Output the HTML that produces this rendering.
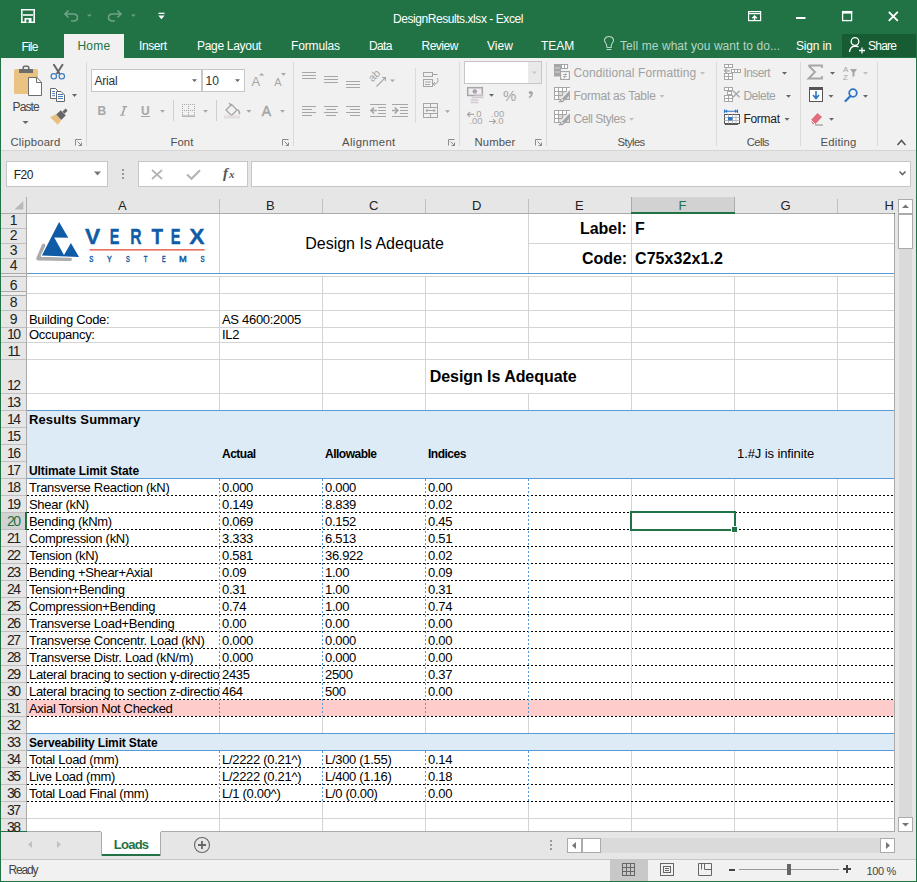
<!DOCTYPE html>
<html><head><meta charset="utf-8"><style>
html,body{margin:0;padding:0;width:917px;height:882px;overflow:hidden;}
body{position:relative;font-family:"Liberation Sans",sans-serif;}
body>div,body>svg{position:absolute;}
</style></head><body>
<div style="left:0px;top:0px;width:917px;height:882px;background:#217346;"></div>
<div style="left:393.00px;top:12px;font-size:12px;line-height:14px;color:#fff;white-space:nowrap;letter-spacing:-0.440px;">DesignResults.xlsx - Excel</div>
<div style="left:64px;top:34px;width:60px;height:24px;background:#f1f1f1;"></div>
<div style="left:21.50px;top:40px;font-size:12px;line-height:14px;color:#fff;white-space:nowrap;letter-spacing:-0.833px;">File</div>
<div style="left:77.40px;top:39px;font-size:12px;line-height:14px;color:#217346;white-space:nowrap;letter-spacing:0.233px;">Home</div>
<div style="left:139.00px;top:39px;font-size:12px;line-height:14px;color:#fff;white-space:nowrap;letter-spacing:-0.400px;">Insert</div>
<div style="left:197.00px;top:39px;font-size:12px;line-height:14px;color:#fff;white-space:nowrap;letter-spacing:-0.300px;">Page Layout</div>
<div style="left:291.00px;top:39px;font-size:12px;line-height:14px;color:#fff;white-space:nowrap;letter-spacing:-0.143px;">Formulas</div>
<div style="left:369.00px;top:39px;font-size:12px;line-height:14px;color:#fff;white-space:nowrap;letter-spacing:-0.667px;">Data</div>
<div style="left:421.50px;top:39px;font-size:12px;line-height:14px;color:#fff;white-space:nowrap;letter-spacing:-0.500px;">Review</div>
<div style="left:487.00px;top:39px;font-size:12px;line-height:14px;color:#fff;white-space:nowrap;">View</div>
<div style="left:541.00px;top:39px;font-size:12px;line-height:14px;color:#fff;white-space:nowrap;">TEAM</div>
<div style="left:620.00px;top:39px;font-size:12px;line-height:14px;color:#b8d4c3;white-space:nowrap;letter-spacing:0.069px;">Tell me what you want to do...</div>
<div style="left:796.00px;top:39px;font-size:12px;line-height:14px;color:#fff;white-space:nowrap;letter-spacing:-0.167px;">Sign in</div>
<div style="left:842px;top:34px;width:74px;height:23px;background:#185c34;"></div>
<div style="left:868.00px;top:39px;font-size:12px;line-height:14px;color:#fff;white-space:nowrap;letter-spacing:-0.750px;">Share</div>
<div style="left:1px;top:58px;width:915px;height:92px;background:#f1f1f1;"></div>
<div style="left:1px;top:150px;width:915px;height:1px;background:#d5d5d5;"></div>
<div style="left:1px;top:151px;width:915px;height:46px;background:#e6e6e6;"></div>
<div style="left:6px;top:161px;width:100px;height:24px;border:1px solid #c6c6c6;background:#fff;"></div>
<div style="left:13.70px;top:167.5px;font-size:12px;line-height:14px;color:#222;white-space:nowrap;letter-spacing:-0.450px;">F20</div>
<div style="left:138px;top:161px;width:108px;height:24px;border:1px solid #c6c6c6;background:#fff;"></div>
<div style="left:251px;top:161px;width:658px;height:24px;border:1px solid #c6c6c6;background:#fff;"></div>
<div style="left:1px;top:197px;width:915px;height:16px;background:#e6e6e6;"></div>
<div style="left:1px;top:213px;width:26px;height:618px;background:#e6e6e6;"></div>
<div style="left:631px;top:197px;width:103px;height:16px;background:#d2d2d2;"></div>
<div style="left:219px;top:199px;width:1px;height:14px;background:#c0c0c0;"></div>
<div style="left:322px;top:199px;width:1px;height:14px;background:#c0c0c0;"></div>
<div style="left:425px;top:199px;width:1px;height:14px;background:#c0c0c0;"></div>
<div style="left:528px;top:199px;width:1px;height:14px;background:#c0c0c0;"></div>
<div style="left:631px;top:199px;width:1px;height:14px;background:#c0c0c0;"></div>
<div style="left:734px;top:199px;width:1px;height:14px;background:#c0c0c0;"></div>
<div style="left:837px;top:199px;width:1px;height:14px;background:#c0c0c0;"></div>
<div style="left:26px;top:197px;width:1px;height:634px;background:#ababab;"></div>
<svg style="left:14px;top:200px;" width="10" height="10" viewBox="0 0 10 10"><path d="M9.3 1 V9.6 H0.4 Z" fill="#b9b9b9"/></svg>
<div style="left:1px;top:213px;width:893px;height:1px;background:#ababab;"></div>
<div style="left:631px;top:197px;width:1px;height:15px;background:#ababab;"></div>
<div style="left:734px;top:197px;width:1px;height:15px;background:#ababab;"></div>
<div style="left:631px;top:212px;width:104px;height:2px;background:#217346;"></div>
<div style="left:118.00px;top:198px;font-size:13px;line-height:15px;color:#222;white-space:nowrap;">A</div>
<div style="left:266.00px;top:198px;font-size:13px;line-height:15px;color:#222;white-space:nowrap;">B</div>
<div style="left:369.00px;top:198px;font-size:13px;line-height:15px;color:#222;white-space:nowrap;">C</div>
<div style="left:472.00px;top:198px;font-size:13px;line-height:15px;color:#222;white-space:nowrap;">D</div>
<div style="left:575.00px;top:198px;font-size:13px;line-height:15px;color:#222;white-space:nowrap;">E</div>
<div style="left:678.50px;top:198px;font-size:13px;line-height:15px;color:#217346;white-space:nowrap;">F</div>
<div style="left:780.50px;top:198px;font-size:13px;line-height:15px;color:#222;white-space:nowrap;">G</div>
<div style="left:884.50px;top:198px;font-size:13px;line-height:15px;color:#222;white-space:nowrap;">H</div>
<div style="left:27px;top:214px;width:867px;height:617px;background:#fff;"></div>
<div style="left:27px;top:411px;width:867px;height:67px;background:#ddebf7;"></div>
<div style="left:27px;top:700px;width:867px;height:16px;background:#ffcccc;"></div>
<div style="left:27px;top:734px;width:867px;height:16px;background:#ddebf7;"></div>
<div style="left:219px;top:214px;width:1px;height:59px;background:#d4d4d4;"></div>
<div style="left:528px;top:214px;width:1px;height:59px;background:#d4d4d4;"></div>
<div style="left:631px;top:214px;width:1px;height:59px;background:#d4d4d4;"></div>
<div style="left:528px;top:243px;width:366px;height:1px;background:#d4d4d4;"></div>
<div style="left:27px;top:273px;width:867px;height:1px;background:#5b9bd5;"></div>
<div style="left:27px;top:276px;width:867px;height:1px;background:#d4d4d4;"></div>
<div style="left:27px;top:293px;width:867px;height:1px;background:#d4d4d4;"></div>
<div style="left:27px;top:310px;width:867px;height:1px;background:#d4d4d4;"></div>
<div style="left:27px;top:327px;width:867px;height:1px;background:#d4d4d4;"></div>
<div style="left:27px;top:342px;width:867px;height:1px;background:#d4d4d4;"></div>
<div style="left:27px;top:359px;width:867px;height:1px;background:#d4d4d4;"></div>
<div style="left:27px;top:393px;width:867px;height:1px;background:#d4d4d4;"></div>
<div style="left:27px;top:410px;width:867px;height:1px;background:#5b9bd5;"></div>
<div style="left:219px;top:277px;width:1px;height:133px;background:#d4d4d4;"></div>
<div style="left:322px;top:277px;width:1px;height:133px;background:#d4d4d4;"></div>
<div style="left:425px;top:277px;width:1px;height:133px;background:#d4d4d4;"></div>
<div style="left:528px;top:277px;width:1px;height:83px;background:#d4d4d4;"></div>
<div style="left:528px;top:394px;width:1px;height:16px;background:#d4d4d4;"></div>
<div style="left:631px;top:277px;width:1px;height:133px;background:#d4d4d4;"></div>
<div style="left:734px;top:277px;width:1px;height:133px;background:#d4d4d4;"></div>
<div style="left:837px;top:277px;width:1px;height:133px;background:#d4d4d4;"></div>
<div style="left:27px;top:478px;width:867px;height:1px;background:#5b9bd5;"></div>
<div style="left:27px;top:495px;width:867px;height:1px;background:repeating-linear-gradient(90deg,#000 0 2px,transparent 2px 4px);"></div>
<div style="left:27px;top:512px;width:867px;height:1px;background:repeating-linear-gradient(90deg,#000 0 2px,transparent 2px 4px);"></div>
<div style="left:27px;top:529px;width:867px;height:1px;background:repeating-linear-gradient(90deg,#000 0 2px,transparent 2px 4px);"></div>
<div style="left:27px;top:546px;width:867px;height:1px;background:repeating-linear-gradient(90deg,#000 0 2px,transparent 2px 4px);"></div>
<div style="left:27px;top:563px;width:867px;height:1px;background:repeating-linear-gradient(90deg,#000 0 2px,transparent 2px 4px);"></div>
<div style="left:27px;top:580px;width:867px;height:1px;background:repeating-linear-gradient(90deg,#000 0 2px,transparent 2px 4px);"></div>
<div style="left:27px;top:597px;width:867px;height:1px;background:repeating-linear-gradient(90deg,#000 0 2px,transparent 2px 4px);"></div>
<div style="left:27px;top:614px;width:867px;height:1px;background:repeating-linear-gradient(90deg,#000 0 2px,transparent 2px 4px);"></div>
<div style="left:27px;top:631px;width:867px;height:1px;background:repeating-linear-gradient(90deg,#000 0 2px,transparent 2px 4px);"></div>
<div style="left:27px;top:648px;width:867px;height:1px;background:repeating-linear-gradient(90deg,#000 0 2px,transparent 2px 4px);"></div>
<div style="left:27px;top:665px;width:867px;height:1px;background:repeating-linear-gradient(90deg,#000 0 2px,transparent 2px 4px);"></div>
<div style="left:27px;top:682px;width:867px;height:1px;background:repeating-linear-gradient(90deg,#000 0 2px,transparent 2px 4px);"></div>
<div style="left:27px;top:699px;width:867px;height:1px;background:repeating-linear-gradient(90deg,#000 0 2px,transparent 2px 4px);"></div>
<div style="left:27px;top:716px;width:867px;height:1px;background:repeating-linear-gradient(90deg,#000 0 2px,transparent 2px 4px);"></div>
<div style="left:219px;top:479px;width:1px;height:237px;background:repeating-linear-gradient(180deg,#5b9bd5 0 2px,transparent 2px 4px);"></div>
<div style="left:322px;top:479px;width:1px;height:237px;background:repeating-linear-gradient(180deg,#5b9bd5 0 2px,transparent 2px 4px);"></div>
<div style="left:425px;top:479px;width:1px;height:237px;background:repeating-linear-gradient(180deg,#5b9bd5 0 2px,transparent 2px 4px);"></div>
<div style="left:528px;top:479px;width:1px;height:237px;background:repeating-linear-gradient(180deg,#5b9bd5 0 2px,transparent 2px 4px);"></div>
<div style="left:631px;top:479px;width:1px;height:220px;background:#d4d4d4;"></div>
<div style="left:734px;top:479px;width:1px;height:220px;background:#d4d4d4;"></div>
<div style="left:837px;top:479px;width:1px;height:220px;background:#d4d4d4;"></div>
<div style="left:219px;top:717px;width:1px;height:16px;background:#d4d4d4;"></div>
<div style="left:322px;top:717px;width:1px;height:16px;background:#d4d4d4;"></div>
<div style="left:425px;top:717px;width:1px;height:16px;background:#d4d4d4;"></div>
<div style="left:528px;top:717px;width:1px;height:16px;background:#d4d4d4;"></div>
<div style="left:631px;top:717px;width:1px;height:16px;background:#d4d4d4;"></div>
<div style="left:734px;top:717px;width:1px;height:16px;background:#d4d4d4;"></div>
<div style="left:837px;top:717px;width:1px;height:16px;background:#d4d4d4;"></div>
<div style="left:27px;top:733px;width:867px;height:1px;background:#5b9bd5;"></div>
<div style="left:27px;top:750px;width:867px;height:1px;background:#5b9bd5;"></div>
<div style="left:27px;top:767px;width:867px;height:1px;background:repeating-linear-gradient(90deg,#000 0 2px,transparent 2px 4px);"></div>
<div style="left:27px;top:784px;width:867px;height:1px;background:repeating-linear-gradient(90deg,#000 0 2px,transparent 2px 4px);"></div>
<div style="left:27px;top:801px;width:867px;height:1px;background:repeating-linear-gradient(90deg,#000 0 2px,transparent 2px 4px);"></div>
<div style="left:219px;top:751px;width:1px;height:50px;background:repeating-linear-gradient(180deg,#5b9bd5 0 2px,transparent 2px 4px);"></div>
<div style="left:322px;top:751px;width:1px;height:50px;background:repeating-linear-gradient(180deg,#5b9bd5 0 2px,transparent 2px 4px);"></div>
<div style="left:425px;top:751px;width:1px;height:50px;background:repeating-linear-gradient(180deg,#5b9bd5 0 2px,transparent 2px 4px);"></div>
<div style="left:528px;top:751px;width:1px;height:50px;background:repeating-linear-gradient(180deg,#5b9bd5 0 2px,transparent 2px 4px);"></div>
<div style="left:631px;top:751px;width:1px;height:50px;background:#d4d4d4;"></div>
<div style="left:734px;top:751px;width:1px;height:50px;background:#d4d4d4;"></div>
<div style="left:837px;top:751px;width:1px;height:50px;background:#d4d4d4;"></div>
<div style="left:27px;top:818px;width:867px;height:1px;background:#d4d4d4;"></div>
<div style="left:219px;top:802px;width:1px;height:29px;background:#d4d4d4;"></div>
<div style="left:322px;top:802px;width:1px;height:29px;background:#d4d4d4;"></div>
<div style="left:425px;top:802px;width:1px;height:29px;background:#d4d4d4;"></div>
<div style="left:528px;top:802px;width:1px;height:29px;background:#d4d4d4;"></div>
<div style="left:631px;top:802px;width:1px;height:29px;background:#d4d4d4;"></div>
<div style="left:734px;top:802px;width:1px;height:29px;background:#d4d4d4;"></div>
<div style="left:837px;top:802px;width:1px;height:29px;background:#d4d4d4;"></div>
<div style="left:630px;top:511px;width:106px;height:2px;background:#217346;"></div>
<div style="left:630px;top:529px;width:106px;height:2px;background:#217346;"></div>
<div style="left:630px;top:511px;width:2px;height:20px;background:#217346;"></div>
<div style="left:734px;top:511px;width:2px;height:20px;background:#217346;"></div>
<div style="left:731px;top:526px;width:7px;height:7px;background:#fff;"></div>
<div style="left:732px;top:527px;width:5px;height:5px;background:#217346;"></div>
<div style="left:894px;top:214px;width:1px;height:618px;background:#ababab;"></div>
<div style="left:27px;top:831px;width:868px;height:1px;background:#ababab;"></div>
<div style="left:1px;top:228px;width:25px;height:1px;background:#c0c0c0;"></div>
<div style="left:1px;top:243px;width:25px;height:1px;background:#c0c0c0;"></div>
<div style="left:1px;top:258px;width:25px;height:1px;background:#c0c0c0;"></div>
<div style="left:1px;top:273px;width:25px;height:1px;background:#c0c0c0;"></div>
<div style="left:1px;top:293px;width:25px;height:1px;background:#c0c0c0;"></div>
<div style="left:1px;top:310px;width:25px;height:1px;background:#c0c0c0;"></div>
<div style="left:1px;top:327px;width:25px;height:1px;background:#c0c0c0;"></div>
<div style="left:1px;top:342px;width:25px;height:1px;background:#c0c0c0;"></div>
<div style="left:1px;top:359px;width:25px;height:1px;background:#c0c0c0;"></div>
<div style="left:1px;top:393px;width:25px;height:1px;background:#c0c0c0;"></div>
<div style="left:1px;top:410px;width:25px;height:1px;background:#c0c0c0;"></div>
<div style="left:1px;top:427px;width:25px;height:1px;background:#c0c0c0;"></div>
<div style="left:1px;top:444px;width:25px;height:1px;background:#c0c0c0;"></div>
<div style="left:1px;top:461px;width:25px;height:1px;background:#c0c0c0;"></div>
<div style="left:1px;top:478px;width:25px;height:1px;background:#c0c0c0;"></div>
<div style="left:1px;top:495px;width:25px;height:1px;background:#c0c0c0;"></div>
<div style="left:1px;top:512px;width:25px;height:1px;background:#c0c0c0;"></div>
<div style="left:1px;top:529px;width:25px;height:1px;background:#c0c0c0;"></div>
<div style="left:1px;top:546px;width:25px;height:1px;background:#c0c0c0;"></div>
<div style="left:1px;top:563px;width:25px;height:1px;background:#c0c0c0;"></div>
<div style="left:1px;top:580px;width:25px;height:1px;background:#c0c0c0;"></div>
<div style="left:1px;top:597px;width:25px;height:1px;background:#c0c0c0;"></div>
<div style="left:1px;top:614px;width:25px;height:1px;background:#c0c0c0;"></div>
<div style="left:1px;top:631px;width:25px;height:1px;background:#c0c0c0;"></div>
<div style="left:1px;top:648px;width:25px;height:1px;background:#c0c0c0;"></div>
<div style="left:1px;top:665px;width:25px;height:1px;background:#c0c0c0;"></div>
<div style="left:1px;top:682px;width:25px;height:1px;background:#c0c0c0;"></div>
<div style="left:1px;top:699px;width:25px;height:1px;background:#c0c0c0;"></div>
<div style="left:1px;top:716px;width:25px;height:1px;background:#c0c0c0;"></div>
<div style="left:1px;top:733px;width:25px;height:1px;background:#c0c0c0;"></div>
<div style="left:1px;top:750px;width:25px;height:1px;background:#c0c0c0;"></div>
<div style="left:1px;top:767px;width:25px;height:1px;background:#c0c0c0;"></div>
<div style="left:1px;top:784px;width:25px;height:1px;background:#c0c0c0;"></div>
<div style="left:1px;top:801px;width:25px;height:1px;background:#c0c0c0;"></div>
<div style="left:1px;top:818px;width:25px;height:1px;background:#c0c0c0;"></div>
<div style="left:1px;top:835px;width:25px;height:1px;background:#c0c0c0;"></div>
<div style="left:1px;top:273px;width:25px;height:1px;background:#ababab;"></div>
<div style="left:1px;top:276px;width:25px;height:1px;background:#ababab;"></div>
<div style="left:1px;top:291px;width:25px;height:1px;background:#ababab;"></div>
<div style="left:1px;top:295px;width:25px;height:1px;background:#ababab;"></div>
<div style="left:1px;top:292px;width:25px;height:3px;background:#ececec;"></div>
<div style="left:1px;top:274px;width:25px;height:2px;background:#ececec;"></div>
<div style="left:1px;top:513px;width:25px;height:16px;background:#d2d2d2;"></div>
<div style="left:25px;top:512px;width:2px;height:18px;background:#217346;"></div>
<div style="left:9.70px;top:212px;font-size:14px;line-height:16px;color:#222;white-space:nowrap;">1</div>
<div style="left:9.70px;top:227px;font-size:14px;line-height:16px;color:#222;white-space:nowrap;">2</div>
<div style="left:9.70px;top:242px;font-size:14px;line-height:16px;color:#222;white-space:nowrap;">3</div>
<div style="left:9.70px;top:257px;font-size:14px;line-height:16px;color:#222;white-space:nowrap;">4</div>
<div style="left:9.70px;top:277px;font-size:14px;line-height:16px;color:#222;white-space:nowrap;">6</div>
<div style="left:9.70px;top:294px;font-size:14px;line-height:16px;color:#222;white-space:nowrap;">8</div>
<div style="left:9.70px;top:311px;font-size:14px;line-height:16px;color:#222;white-space:nowrap;">9</div>
<div style="left:7.00px;top:326px;font-size:14px;line-height:16px;color:#222;white-space:nowrap;letter-spacing:-1.600px;">10</div>
<div style="left:7.45px;top:343px;font-size:14px;line-height:16px;color:#222;white-space:nowrap;letter-spacing:-1.500px;">11</div>
<div style="left:7.00px;top:377px;font-size:14px;line-height:16px;color:#222;white-space:nowrap;letter-spacing:-1.600px;">12</div>
<div style="left:7.00px;top:394px;font-size:14px;line-height:16px;color:#222;white-space:nowrap;letter-spacing:-1.600px;">13</div>
<div style="left:7.00px;top:411px;font-size:14px;line-height:16px;color:#222;white-space:nowrap;letter-spacing:-1.600px;">14</div>
<div style="left:7.00px;top:428px;font-size:14px;line-height:16px;color:#222;white-space:nowrap;letter-spacing:-1.600px;">15</div>
<div style="left:7.00px;top:445px;font-size:14px;line-height:16px;color:#222;white-space:nowrap;letter-spacing:-1.600px;">16</div>
<div style="left:7.00px;top:462px;font-size:14px;line-height:16px;color:#222;white-space:nowrap;letter-spacing:-1.600px;">17</div>
<div style="left:7.00px;top:479px;font-size:14px;line-height:16px;color:#222;white-space:nowrap;letter-spacing:-1.600px;">18</div>
<div style="left:7.00px;top:496px;font-size:14px;line-height:16px;color:#222;white-space:nowrap;letter-spacing:-1.600px;">19</div>
<div style="left:7.00px;top:513px;font-size:14px;line-height:16px;color:#217346;white-space:nowrap;letter-spacing:-1.600px;">20</div>
<div style="left:7.00px;top:530px;font-size:14px;line-height:16px;color:#222;white-space:nowrap;letter-spacing:-1.600px;">21</div>
<div style="left:7.00px;top:547px;font-size:14px;line-height:16px;color:#222;white-space:nowrap;letter-spacing:-1.600px;">22</div>
<div style="left:7.00px;top:564px;font-size:14px;line-height:16px;color:#222;white-space:nowrap;letter-spacing:-1.600px;">23</div>
<div style="left:7.00px;top:581px;font-size:14px;line-height:16px;color:#222;white-space:nowrap;letter-spacing:-1.600px;">24</div>
<div style="left:7.00px;top:598px;font-size:14px;line-height:16px;color:#222;white-space:nowrap;letter-spacing:-1.600px;">25</div>
<div style="left:7.00px;top:615px;font-size:14px;line-height:16px;color:#222;white-space:nowrap;letter-spacing:-1.600px;">26</div>
<div style="left:7.00px;top:632px;font-size:14px;line-height:16px;color:#222;white-space:nowrap;letter-spacing:-1.600px;">27</div>
<div style="left:7.00px;top:649px;font-size:14px;line-height:16px;color:#222;white-space:nowrap;letter-spacing:-1.600px;">28</div>
<div style="left:7.00px;top:666px;font-size:14px;line-height:16px;color:#222;white-space:nowrap;letter-spacing:-1.600px;">29</div>
<div style="left:7.00px;top:683px;font-size:14px;line-height:16px;color:#222;white-space:nowrap;letter-spacing:-1.600px;">30</div>
<div style="left:7.00px;top:700px;font-size:14px;line-height:16px;color:#222;white-space:nowrap;letter-spacing:-1.600px;">31</div>
<div style="left:7.00px;top:717px;font-size:14px;line-height:16px;color:#222;white-space:nowrap;letter-spacing:-1.600px;">32</div>
<div style="left:7.00px;top:734px;font-size:14px;line-height:16px;color:#222;white-space:nowrap;letter-spacing:-1.600px;">33</div>
<div style="left:7.00px;top:751px;font-size:14px;line-height:16px;color:#222;white-space:nowrap;letter-spacing:-1.600px;">34</div>
<div style="left:7.00px;top:768px;font-size:14px;line-height:16px;color:#222;white-space:nowrap;letter-spacing:-1.600px;">35</div>
<div style="left:7.00px;top:785px;font-size:14px;line-height:16px;color:#222;white-space:nowrap;letter-spacing:-1.600px;">36</div>
<div style="left:7.00px;top:802px;font-size:14px;line-height:16px;color:#222;white-space:nowrap;letter-spacing:-1.600px;">37</div>
<div style="left:7.00px;top:819px;font-size:14px;line-height:16px;color:#222;white-space:nowrap;letter-spacing:-1.600px;">38</div>
<div style="left:29px;top:312px;font-size:13px;line-height:15px;color:#000;white-space:nowrap;letter-spacing:-0.3px;">Building Code:</div>
<div style="left:222px;top:312px;font-size:13px;line-height:15px;color:#000;white-space:nowrap;letter-spacing:-0.3px;">AS 4600:2005</div>
<div style="left:29px;top:327px;font-size:13px;line-height:15px;color:#000;white-space:nowrap;letter-spacing:-0.3px;">Occupancy:</div>
<div style="left:222px;top:327px;font-size:13px;line-height:15px;color:#000;white-space:nowrap;letter-spacing:-0.3px;">IL2</div>
<div style="left:29px;top:412px;font-size:13px;line-height:15px;color:#000;white-space:nowrap;letter-spacing:0.1px;font-weight:bold;">Results Summary</div>
<div style="left:222px;top:447px;font-size:12px;line-height:14px;color:#000;white-space:nowrap;letter-spacing:-0.5px;font-weight:bold;">Actual</div>
<div style="left:325px;top:447px;font-size:12px;line-height:14px;color:#000;white-space:nowrap;letter-spacing:-0.5px;font-weight:bold;">Allowable</div>
<div style="left:428px;top:447px;font-size:12px;line-height:14px;color:#000;white-space:nowrap;letter-spacing:-0.5px;font-weight:bold;">Indices</div>
<div style="left:29px;top:464px;font-size:12px;line-height:14px;color:#000;white-space:nowrap;letter-spacing:-0.1px;font-weight:bold;">Ultimate Limit State</div>
<div style="left:737px;top:446px;font-size:13px;line-height:15px;color:#000;white-space:nowrap;letter-spacing:-0.1px;">1.#J is infinite</div>
<div style="left:29px;top:480px;font-size:13px;line-height:15px;color:#000;white-space:nowrap;letter-spacing:-0.3px;">Transverse Reaction (kN)</div>
<div style="left:222px;top:480px;font-size:13px;line-height:15px;color:#000;white-space:nowrap;letter-spacing:-0.3px;">0.000</div>
<div style="left:325px;top:480px;font-size:13px;line-height:15px;color:#000;white-space:nowrap;letter-spacing:-0.3px;">0.000</div>
<div style="left:428px;top:480px;font-size:13px;line-height:15px;color:#000;white-space:nowrap;letter-spacing:-0.3px;">0.00</div>
<div style="left:29px;top:497px;font-size:13px;line-height:15px;color:#000;white-space:nowrap;letter-spacing:-0.3px;">Shear (kN)</div>
<div style="left:222px;top:497px;font-size:13px;line-height:15px;color:#000;white-space:nowrap;letter-spacing:-0.3px;">0.149</div>
<div style="left:325px;top:497px;font-size:13px;line-height:15px;color:#000;white-space:nowrap;letter-spacing:-0.3px;">8.839</div>
<div style="left:428px;top:497px;font-size:13px;line-height:15px;color:#000;white-space:nowrap;letter-spacing:-0.3px;">0.02</div>
<div style="left:29px;top:514px;font-size:13px;line-height:15px;color:#000;white-space:nowrap;letter-spacing:-0.3px;">Bending (kNm)</div>
<div style="left:222px;top:514px;font-size:13px;line-height:15px;color:#000;white-space:nowrap;letter-spacing:-0.3px;">0.069</div>
<div style="left:325px;top:514px;font-size:13px;line-height:15px;color:#000;white-space:nowrap;letter-spacing:-0.3px;">0.152</div>
<div style="left:428px;top:514px;font-size:13px;line-height:15px;color:#000;white-space:nowrap;letter-spacing:-0.3px;">0.45</div>
<div style="left:29px;top:531px;font-size:13px;line-height:15px;color:#000;white-space:nowrap;letter-spacing:-0.3px;">Compression (kN)</div>
<div style="left:222px;top:531px;font-size:13px;line-height:15px;color:#000;white-space:nowrap;letter-spacing:-0.3px;">3.333</div>
<div style="left:325px;top:531px;font-size:13px;line-height:15px;color:#000;white-space:nowrap;letter-spacing:-0.3px;">6.513</div>
<div style="left:428px;top:531px;font-size:13px;line-height:15px;color:#000;white-space:nowrap;letter-spacing:-0.3px;">0.51</div>
<div style="left:29px;top:548px;font-size:13px;line-height:15px;color:#000;white-space:nowrap;letter-spacing:-0.3px;">Tension (kN)</div>
<div style="left:222px;top:548px;font-size:13px;line-height:15px;color:#000;white-space:nowrap;letter-spacing:-0.3px;">0.581</div>
<div style="left:325px;top:548px;font-size:13px;line-height:15px;color:#000;white-space:nowrap;letter-spacing:-0.3px;">36.922</div>
<div style="left:428px;top:548px;font-size:13px;line-height:15px;color:#000;white-space:nowrap;letter-spacing:-0.3px;">0.02</div>
<div style="left:29px;top:565px;font-size:13px;line-height:15px;color:#000;white-space:nowrap;letter-spacing:-0.3px;">Bending +Shear+Axial</div>
<div style="left:222px;top:565px;font-size:13px;line-height:15px;color:#000;white-space:nowrap;letter-spacing:-0.3px;">0.09</div>
<div style="left:325px;top:565px;font-size:13px;line-height:15px;color:#000;white-space:nowrap;letter-spacing:-0.3px;">1.00</div>
<div style="left:428px;top:565px;font-size:13px;line-height:15px;color:#000;white-space:nowrap;letter-spacing:-0.3px;">0.09</div>
<div style="left:29px;top:582px;font-size:13px;line-height:15px;color:#000;white-space:nowrap;letter-spacing:-0.3px;">Tension+Bending</div>
<div style="left:222px;top:582px;font-size:13px;line-height:15px;color:#000;white-space:nowrap;letter-spacing:-0.3px;">0.31</div>
<div style="left:325px;top:582px;font-size:13px;line-height:15px;color:#000;white-space:nowrap;letter-spacing:-0.3px;">1.00</div>
<div style="left:428px;top:582px;font-size:13px;line-height:15px;color:#000;white-space:nowrap;letter-spacing:-0.3px;">0.31</div>
<div style="left:29px;top:599px;font-size:13px;line-height:15px;color:#000;white-space:nowrap;letter-spacing:-0.3px;">Compression+Bending</div>
<div style="left:222px;top:599px;font-size:13px;line-height:15px;color:#000;white-space:nowrap;letter-spacing:-0.3px;">0.74</div>
<div style="left:325px;top:599px;font-size:13px;line-height:15px;color:#000;white-space:nowrap;letter-spacing:-0.3px;">1.00</div>
<div style="left:428px;top:599px;font-size:13px;line-height:15px;color:#000;white-space:nowrap;letter-spacing:-0.3px;">0.74</div>
<div style="left:29px;top:616px;font-size:13px;line-height:15px;color:#000;white-space:nowrap;letter-spacing:-0.3px;">Transverse Load+Bending</div>
<div style="left:222px;top:616px;font-size:13px;line-height:15px;color:#000;white-space:nowrap;letter-spacing:-0.3px;">0.00</div>
<div style="left:325px;top:616px;font-size:13px;line-height:15px;color:#000;white-space:nowrap;letter-spacing:-0.3px;">0.00</div>
<div style="left:428px;top:616px;font-size:13px;line-height:15px;color:#000;white-space:nowrap;letter-spacing:-0.3px;">0.00</div>
<div style="left:29px;top:633px;font-size:13px;line-height:15px;color:#000;white-space:nowrap;letter-spacing:-0.3px;">Transverse Concentr. Load (kN)</div>
<div style="left:222px;top:633px;font-size:13px;line-height:15px;color:#000;white-space:nowrap;letter-spacing:-0.3px;">0.000</div>
<div style="left:325px;top:633px;font-size:13px;line-height:15px;color:#000;white-space:nowrap;letter-spacing:-0.3px;">0.000</div>
<div style="left:428px;top:633px;font-size:13px;line-height:15px;color:#000;white-space:nowrap;letter-spacing:-0.3px;">0.00</div>
<div style="left:29px;top:650px;font-size:13px;line-height:15px;color:#000;white-space:nowrap;letter-spacing:-0.3px;">Transverse Distr. Load (kN/m)</div>
<div style="left:222px;top:650px;font-size:13px;line-height:15px;color:#000;white-space:nowrap;letter-spacing:-0.3px;">0.000</div>
<div style="left:325px;top:650px;font-size:13px;line-height:15px;color:#000;white-space:nowrap;letter-spacing:-0.3px;">0.000</div>
<div style="left:428px;top:650px;font-size:13px;line-height:15px;color:#000;white-space:nowrap;letter-spacing:-0.3px;">0.00</div>
<div style="left:29px;top:667px;width:190px;height:15px;overflow:hidden;font-size:13px;line-height:15px;white-space:nowrap;letter-spacing:-0.3px;">Lateral bracing to section y-directio</div>
<div style="left:222px;top:667px;font-size:13px;line-height:15px;color:#000;white-space:nowrap;letter-spacing:-0.3px;">2435</div>
<div style="left:325px;top:667px;font-size:13px;line-height:15px;color:#000;white-space:nowrap;letter-spacing:-0.3px;">2500</div>
<div style="left:428px;top:667px;font-size:13px;line-height:15px;color:#000;white-space:nowrap;letter-spacing:-0.3px;">0.37</div>
<div style="left:29px;top:684px;width:190px;height:15px;overflow:hidden;font-size:13px;line-height:15px;white-space:nowrap;letter-spacing:-0.3px;">Lateral bracing to section z-directio</div>
<div style="left:222px;top:684px;font-size:13px;line-height:15px;color:#000;white-space:nowrap;letter-spacing:-0.3px;">464</div>
<div style="left:325px;top:684px;font-size:13px;line-height:15px;color:#000;white-space:nowrap;letter-spacing:-0.3px;">500</div>
<div style="left:428px;top:684px;font-size:13px;line-height:15px;color:#000;white-space:nowrap;letter-spacing:-0.3px;">0.00</div>
<div style="left:29px;top:752px;font-size:13px;line-height:15px;color:#000;white-space:nowrap;letter-spacing:-0.3px;">Total Load (mm)</div>
<div style="left:222px;top:752px;font-size:13px;line-height:15px;color:#000;white-space:nowrap;letter-spacing:-0.3px;">L/2222 (0.21^)</div>
<div style="left:325px;top:752px;font-size:13px;line-height:15px;color:#000;white-space:nowrap;letter-spacing:-0.3px;">L/300 (1.55)</div>
<div style="left:428px;top:752px;font-size:13px;line-height:15px;color:#000;white-space:nowrap;letter-spacing:-0.3px;">0.14</div>
<div style="left:29px;top:769px;font-size:13px;line-height:15px;color:#000;white-space:nowrap;letter-spacing:-0.3px;">Live Load (mm)</div>
<div style="left:222px;top:769px;font-size:13px;line-height:15px;color:#000;white-space:nowrap;letter-spacing:-0.3px;">L/2222 (0.21^)</div>
<div style="left:325px;top:769px;font-size:13px;line-height:15px;color:#000;white-space:nowrap;letter-spacing:-0.3px;">L/400 (1.16)</div>
<div style="left:428px;top:769px;font-size:13px;line-height:15px;color:#000;white-space:nowrap;letter-spacing:-0.3px;">0.18</div>
<div style="left:29px;top:786px;font-size:13px;line-height:15px;color:#000;white-space:nowrap;letter-spacing:-0.3px;">Total Load Final (mm)</div>
<div style="left:222px;top:786px;font-size:13px;line-height:15px;color:#000;white-space:nowrap;letter-spacing:-0.3px;">L/1 (0.00^)</div>
<div style="left:325px;top:786px;font-size:13px;line-height:15px;color:#000;white-space:nowrap;letter-spacing:-0.3px;">L/0 (0.00)</div>
<div style="left:428px;top:786px;font-size:13px;line-height:15px;color:#000;white-space:nowrap;letter-spacing:-0.3px;">0.00</div>
<div style="left:29px;top:701px;font-size:13px;line-height:15px;color:#000;white-space:nowrap;letter-spacing:-0.35px;">Axial Torsion Not Checked</div>
<div style="left:29px;top:736px;font-size:12px;line-height:14px;color:#000;white-space:nowrap;letter-spacing:-0.15px;font-weight:bold;">Serveability Limit State</div>
<div style="left:305.20px;top:235px;font-size:16px;line-height:17px;color:#000;white-space:nowrap;">Design Is Adequate</div>
<div style="left:580.00px;top:220px;font-size:16px;line-height:17px;color:#000;white-space:nowrap;font-weight:bold;letter-spacing:-0.040px;">Label:</div>
<div style="left:635.00px;top:220px;font-size:16px;line-height:17px;color:#000;white-space:nowrap;font-weight:bold;">F</div>
<div style="left:582.00px;top:250px;font-size:16px;line-height:17px;color:#000;white-space:nowrap;font-weight:bold;letter-spacing:-0.050px;">Code:</div>
<div style="left:635.00px;top:250px;font-size:16px;line-height:17px;color:#000;white-space:nowrap;font-weight:bold;letter-spacing:0.078px;">C75x32x1.2</div>
<div style="left:429.70px;top:368px;font-size:16px;line-height:17px;color:#000;white-space:nowrap;font-weight:bold;letter-spacing:-0.053px;">Design Is Adequate</div>
<div style="left:895px;top:213px;width:21px;height:619px;background:#e6e6e6;"></div>
<div style="left:898px;top:199px;width:13px;height:13px;border:1px solid #ababab;background:#fff;"></div>
<svg style="left:898px;top:199px;" width="15" height="15" viewBox="0 0 15 15"><path d="M4 9 L7.5 5.5 L11 9 Z" fill="#777"/></svg>
<div style="left:898px;top:214px;width:13px;height:33px;border:1px solid #ababab;background:#fff;"></div>
<div style="left:899px;top:249px;width:13px;height:568px;background:#dadada;"></div>
<div style="left:898px;top:817px;width:13px;height:13px;border:1px solid #ababab;background:#fff;"></div>
<svg style="left:898px;top:817px;" width="15" height="15" viewBox="0 0 15 15"><path d="M4 6 L7.5 9.5 L11 6 Z" fill="#777"/></svg>
<div style="left:1px;top:832px;width:915px;height:27px;background:#e6e6e6;"></div>
<svg style="left:26px;top:839px;" width="40" height="12" viewBox="0 0 40 12"><path d="M2 5.5 L6 2 L6 9 Z" fill="#c0c0c0"/><path d="M31 2 L31 9 L35 5.5 Z" fill="#c0c0c0"/></svg>
<div style="left:101px;top:831px;width:60px;height:25px;background:#fff;"></div>
<div style="left:101px;top:832px;width:1px;height:24px;background:#ababab;"></div>
<div style="left:160px;top:832px;width:1px;height:24px;background:#ababab;"></div>
<div style="left:102px;top:854px;width:58px;height:2px;background:#217346;"></div>
<div style="left:113.80px;top:837px;font-size:13px;line-height:15px;color:#217346;white-space:nowrap;font-weight:bold;letter-spacing:-0.750px;">Loads</div>
<svg style="left:193px;top:836px;" width="18" height="18" viewBox="0 0 18 18"><circle cx="9" cy="9" r="7.5" fill="none" stroke="#666" stroke-width="1.1"/><path d="M9 5 V13 M5 9 H13" stroke="#666" stroke-width="1.8"/></svg>
<div style="left:550px;top:840px;width:2px;height:2px;background:#999;"></div>
<div style="left:550px;top:844px;width:2px;height:2px;background:#999;"></div>
<div style="left:550px;top:848px;width:2px;height:2px;background:#999;"></div>
<div style="left:582px;top:838px;width:299px;height:15px;background:#dadada;"></div>
<div style="left:567px;top:838px;width:13px;height:13px;border:1px solid #ababab;background:#fff;"></div>
<svg style="left:567px;top:838px;" width="15" height="15" viewBox="0 0 15 15"><path d="M5 7.5 L9 4 L9 11 Z" fill="#777"/></svg>
<div style="left:582px;top:838px;width:17px;height:13px;border:1px solid #ababab;background:#fff;"></div>
<div style="left:880px;top:838px;width:13px;height:13px;border:1px solid #ababab;background:#fff;"></div>
<svg style="left:880px;top:838px;" width="15" height="15" viewBox="0 0 15 15"><path d="M10 7.5 L6 4 L6 11 Z" fill="#777"/></svg>
<div style="left:1px;top:859px;width:915px;height:1px;background:#c6c6c6;"></div>
<div style="left:1px;top:860px;width:915px;height:21px;background:#f1f1f1;"></div>
<div style="left:8.50px;top:863px;font-size:12px;line-height:14px;color:#444;white-space:nowrap;letter-spacing:-1.150px;">Ready</div>
<div style="left:610px;top:860px;width:38px;height:21px;background:#c8c8c8;"></div>
<svg style="left:620px;top:861px;" width="16" height="17" viewBox="0 0 16 17"><g fill="none" stroke="#666" stroke-width="1"><rect x="2.5" y="2.5" width="12" height="12"/><path d="M6.5 2.5 V14.5 M10.5 2.5 V14.5 M2.5 6.5 H14.5 M2.5 10.5 H14.5"/></g></svg>
<svg style="left:659px;top:861px;" width="17" height="17" viewBox="0 0 17 17"><g fill="none" stroke="#666" stroke-width="1"><rect x="1.5" y="2.5" width="13" height="12"/><rect x="4.5" y="5.5" width="7" height="6"/><path d="M6 7.5 H10 M6 9.5 H10"/></g></svg>
<svg style="left:697px;top:861px;" width="17" height="17" viewBox="0 0 17 17"><g fill="none" stroke="#666" stroke-width="1"><path d="M1.5 2.5 H14.5 V14.5 H1.5 Z M7.5 2.5 V8.5 H14.5 M4.5 2.5 V8.5"/></g></svg>
<div style="left:729px;top:869px;width:6px;height:2px;background:#444;"></div>
<div style="left:739px;top:869px;width:100px;height:1px;background:#999;"></div>
<div style="left:787px;top:864px;width:4px;height:11px;background:#666;"></div>
<div style="left:843px;top:868px;width:8px;height:2px;background:#444;"></div>
<div style="left:846px;top:865px;width:2px;height:8px;background:#444;"></div>
<div style="left:866.60px;top:864.5px;font-size:11px;line-height:12px;color:#444;white-space:nowrap;letter-spacing:-0.400px;white-space:pre;">100 %</div>
<div style="left:0px;top:0px;width:1px;height:882px;background:#217346;"></div>
<div style="left:916px;top:0px;width:1px;height:882px;background:#217346;"></div>
<div style="left:0px;top:881px;width:917px;height:1px;background:#217346;"></div>
<svg style="left:26px;top:213px;" width="194" height="60" viewBox="0 0 194 60"><path d="M17.6,32.6 L12.2,45.6 L44.0,46.2" fill="none" stroke="#ababab" stroke-width="3.8" stroke-linejoin="round" stroke-linecap="round"/><polygon points="33.1,9.0 42.3,24.8 28.2,24.4 38.0,42.0 44.9,30.0 53.0,44.0 15.9,42.6" fill="#fff" stroke="#fff" stroke-width="2.2" stroke-linejoin="round"/><polygon points="33.1,9.0 42.3,24.8 28.2,24.4 38.0,42.0 44.9,30.0 53.0,44.0 15.9,42.6" fill="#105ba6"/><text x="0" y="0" font-family="Liberation Sans" font-weight="bold" font-size="22" fill="#105ba6" stroke="#105ba6" stroke-width="0.35" transform="translate(59.00,31) scale(1.040,1.016)">V</text><text x="0" y="0" font-family="Liberation Sans" font-weight="bold" font-size="22" fill="#105ba6" stroke="#105ba6" stroke-width="0.35" transform="translate(83.80,31) scale(0.660,1.016)">E</text><text x="0" y="0" font-family="Liberation Sans" font-weight="bold" font-size="22" fill="#105ba6" stroke="#105ba6" stroke-width="0.35" transform="translate(104.30,31) scale(0.712,1.016)">R</text><text x="0" y="0" font-family="Liberation Sans" font-weight="bold" font-size="22" fill="#105ba6" stroke="#105ba6" stroke-width="0.35" transform="translate(125.60,31) scale(0.857,1.016)">T</text><text x="0" y="0" font-family="Liberation Sans" font-weight="bold" font-size="22" fill="#105ba6" stroke="#105ba6" stroke-width="0.35" transform="translate(144.70,31) scale(0.667,1.016)">E</text><text x="0" y="0" font-family="Liberation Sans" font-weight="bold" font-size="22" fill="#105ba6" stroke="#105ba6" stroke-width="0.35" transform="translate(163.20,31) scale(1.040,1.016)">X</text><text x="0" y="0" font-family="Liberation Sans" font-size="8.5" fill="#105ba6" stroke="#105ba6" stroke-width="0.45" transform="translate(63.20,48.5) scale(0.717,1)">S</text><text x="0" y="0" font-family="Liberation Sans" font-size="8.5" fill="#105ba6" stroke="#105ba6" stroke-width="0.45" transform="translate(81.00,48.5) scale(0.833,1)">Y</text><text x="0" y="0" font-family="Liberation Sans" font-size="8.5" fill="#105ba6" stroke="#105ba6" stroke-width="0.45" transform="translate(100.00,48.5) scale(0.667,1)">S</text><text x="0" y="0" font-family="Liberation Sans" font-size="8.5" fill="#105ba6" stroke="#105ba6" stroke-width="0.45" transform="translate(117.80,48.5) scale(0.700,1)">T</text><text x="0" y="0" font-family="Liberation Sans" font-size="8.5" fill="#105ba6" stroke="#105ba6" stroke-width="0.45" transform="translate(136.00,48.5) scale(0.633,1)">E</text><text x="0" y="0" font-family="Liberation Sans" font-size="8.5" fill="#105ba6" stroke="#105ba6" stroke-width="0.45" transform="translate(153.00,48.5) scale(1.087,1)">M</text><text x="0" y="0" font-family="Liberation Sans" font-size="8.5" fill="#105ba6" stroke="#105ba6" stroke-width="0.45" transform="translate(174.50,48.5) scale(0.717,1)">S</text><rect x="63.599999999999994" y="36" width="115" height="1.6" fill="#e8705f"/></svg>
<div style="left:12.60px;top:100px;font-size:12px;line-height:14px;color:#444;white-space:nowrap;letter-spacing:-0.900px;">Paste</div>
<div style="left:10.50px;top:135.5px;font-size:11.3px;line-height:12px;color:#505050;white-space:nowrap;letter-spacing:0.188px;">Clipboard</div>
<div style="left:170.40px;top:135.5px;font-size:11.3px;line-height:12px;color:#505050;white-space:nowrap;letter-spacing:0.133px;">Font</div>
<div style="left:342.00px;top:135.5px;font-size:11.3px;line-height:12px;color:#505050;white-space:nowrap;letter-spacing:0.375px;">Alignment</div>
<div style="left:474.60px;top:135.5px;font-size:11.3px;line-height:12px;color:#505050;white-space:nowrap;letter-spacing:0.080px;">Number</div>
<div style="left:617.60px;top:135.5px;font-size:11.3px;line-height:12px;color:#505050;white-space:nowrap;letter-spacing:-0.620px;">Styles</div>
<div style="left:746.80px;top:135.5px;font-size:11.3px;line-height:12px;color:#505050;white-space:nowrap;letter-spacing:-0.600px;">Cells</div>
<div style="left:820.60px;top:135.5px;font-size:11.3px;line-height:12px;color:#505050;white-space:nowrap;letter-spacing:0.183px;">Editing</div>
<div style="left:573.50px;top:66px;font-size:12px;line-height:14px;color:#a0a0a0;white-space:nowrap;letter-spacing:0.095px;">Conditional Formatting</div>
<div style="left:573.50px;top:89px;font-size:12px;line-height:14px;color:#a0a0a0;white-space:nowrap;letter-spacing:-0.250px;">Format as Table</div>
<div style="left:573.50px;top:112px;font-size:12px;line-height:14px;color:#a0a0a0;white-space:nowrap;letter-spacing:-0.450px;">Cell Styles</div>
<div style="left:743.40px;top:66px;font-size:12px;line-height:14px;color:#a0a0a0;white-space:nowrap;letter-spacing:-0.560px;">Insert</div>
<div style="left:743.40px;top:89px;font-size:12px;line-height:14px;color:#a0a0a0;white-space:nowrap;letter-spacing:-0.480px;">Delete</div>
<div style="left:743.40px;top:112px;font-size:12px;line-height:14px;color:#222;white-space:nowrap;letter-spacing:-0.280px;">Format</div>
<div style="left:97.50px;top:104px;font-size:12px;line-height:14px;color:#a6a6a6;white-space:nowrap;font-weight:bold;">B</div>
<div style="left:141.00px;top:104px;font-size:12px;line-height:14px;color:#a6a6a6;white-space:nowrap;font-weight:bold;">U</div>
<div style="left:141px;top:116px;width:9px;height:1.2px;background:#a6a6a6;"></div>
<div style="left:261.70px;top:102.6px;font-size:14px;line-height:16px;color:#a6a6a6;white-space:nowrap;-webkit-text-stroke:0.5px #a6a6a6;">A</div>
<div style="left:251.40px;top:73.5px;font-size:13px;line-height:15px;color:#a6a6a6;white-space:nowrap;">A</div>
<div style="left:274.30px;top:75.5px;font-size:11px;line-height:12px;color:#a6a6a6;white-space:nowrap;">A</div>
<svg style="left:0px;top:0px;" width="917" height="160" viewBox="0 0 917 160"><rect x="86" y="62" width="1" height="84" fill="#dadada"/><rect x="293" y="62" width="1" height="84" fill="#dadada"/><rect x="459" y="62" width="1" height="84" fill="#dadada"/><rect x="546" y="62" width="1" height="84" fill="#dadada"/><rect x="716" y="62" width="1" height="84" fill="#dadada"/><rect x="800" y="62" width="1" height="84" fill="#dadada"/><rect x="877" y="62" width="1" height="84" fill="#dadada"/><rect x="14" y="69" width="24" height="25" rx="1.5" fill="#eac281"/><rect x="19" y="69" width="14" height="4" fill="#6d6d6d"/><rect x="23.2" y="66.2" width="5.6" height="4" rx="1.6" fill="none" stroke="#6d6d6d" stroke-width="1.6"/><path d="M28.5 77.5 H36.8 L41.5 82.2 V95.5 H28.5 Z" fill="#fff" stroke="#6d6d6d" stroke-width="1"/><path d="M36.5 77.5 V82.5 H41.5" fill="none" stroke="#6d6d6d" stroke-width="1"/><path d="M22.5 121 L28.5 121 L25.5 124 Z" fill="#666"/><path d="M53.9 64.8 L59.3 73.2 M62.5 64.8 L57.1 73.2" stroke="#666" stroke-width="2" stroke-linecap="round"/><circle cx="53.8" cy="76.3" r="2.7" fill="none" stroke="#3b7cc0" stroke-width="1.2"/><circle cx="61.8" cy="76.3" r="2.7" fill="none" stroke="#3b7cc0" stroke-width="1.2"/><path d="M50.5 88.5 H55.5 L57.5 90.5 V98.5 H50.5 Z" fill="#fff" stroke="#666" stroke-width="1"/><path d="M56.5 91.5 H61 L64.5 95 V101.5 H56.5 Z" fill="#fff" stroke="#666" stroke-width="1"/><path d="M52.2 91.5 H55 M52.2 93.6 H55 M52.2 95.7 H55" stroke="#2e6fb8" stroke-width="0.9"/><path d="M58 94.5 H63 M58 96.5 H63 M58 98.5 H63" stroke="#2e6fb8" stroke-width="0.9"/><path d="M72 94 L77 94 L74.5 97 Z" fill="#666"/><path d="M50.2 117.3 L56 114.2 L61.2 120.6 L57.8 124.8 Z" fill="#e8c07d"/><path d="M56.2 114.6 L60.8 110.2 L65.8 115.6 L61.2 120 Z" fill="#666"/><path d="M62.5 111.6 L65.6 108.6 L67.6 110.8 L64.5 113.8 Z" fill="#666"/><path d="M75.5 145.5 V139.5 H81.5" fill="none" stroke="#8a8a8a" stroke-width="1"/><path d="M77.5 141.5 L81.5 145.5 M78.5 145.5 H81.5 V142.5" fill="none" stroke="#8a8a8a" stroke-width="1"/><path d="M282.5 145.5 V139.5 H288.5" fill="none" stroke="#8a8a8a" stroke-width="1"/><path d="M284.5 141.5 L288.5 145.5 M285.5 145.5 H288.5 V142.5" fill="none" stroke="#8a8a8a" stroke-width="1"/><path d="M448.5 145.5 V139.5 H454.5" fill="none" stroke="#8a8a8a" stroke-width="1"/><path d="M450.5 141.5 L454.5 145.5 M451.5 145.5 H454.5 V142.5" fill="none" stroke="#8a8a8a" stroke-width="1"/><path d="M535.5 145.5 V139.5 H541.5" fill="none" stroke="#8a8a8a" stroke-width="1"/><path d="M537.5 141.5 L541.5 145.5 M538.5 145.5 H541.5 V142.5" fill="none" stroke="#8a8a8a" stroke-width="1"/><rect x="91.5" y="69.5" width="110" height="22" fill="#fff" stroke="#c6c6c6"/><rect x="202.5" y="69.5" width="42" height="22" fill="#fff" stroke="#c6c6c6"/><path d="M192 79.2 L197 79.2 L194.5 82 Z" fill="#666"/><path d="M235 79.2 L240 79.2 L237.5 82 Z" fill="#666"/><path d="M259 75.5 L261.6 73 L264.2 75.5 Z" fill="#a6a6a6"/><path d="M281 73 L286 73 L283.5 75.8 Z" fill="#a6a6a6"/><path d="M160 110 L165 110 L162.5 112.7 Z" fill="#a6a6a6"/><path d="M203 110 L208 110 L205.5 112.7 Z" fill="#a6a6a6"/><path d="M246.4 110 L251.4 110 L248.9 112.7 Z" fill="#a6a6a6"/><path d="M280 110 L285 110 L282.5 112.7 Z" fill="#a6a6a6"/><rect x="173" y="100" width="1" height="21" fill="#cfcfcf"/><rect x="216" y="100" width="1" height="21" fill="#cfcfcf"/><rect x="182" y="104.0" width="1" height="1" fill="#a6a6a6"/><rect x="184" y="104.0" width="1" height="1" fill="#a6a6a6"/><rect x="186" y="104.0" width="1" height="1" fill="#a6a6a6"/><rect x="188" y="104.0" width="1" height="1" fill="#a6a6a6"/><rect x="190" y="104.0" width="1" height="1" fill="#a6a6a6"/><rect x="192" y="104.0" width="1" height="1" fill="#a6a6a6"/><rect x="194" y="104.0" width="1" height="1" fill="#a6a6a6"/><rect x="182" y="110.0" width="1" height="1" fill="#a6a6a6"/><rect x="184" y="110.0" width="1" height="1" fill="#a6a6a6"/><rect x="186" y="110.0" width="1" height="1" fill="#a6a6a6"/><rect x="188" y="110.0" width="1" height="1" fill="#a6a6a6"/><rect x="190" y="110.0" width="1" height="1" fill="#a6a6a6"/><rect x="192" y="110.0" width="1" height="1" fill="#a6a6a6"/><rect x="194" y="110.0" width="1" height="1" fill="#a6a6a6"/><rect x="182" y="106" width="1" height="1" fill="#a6a6a6"/><rect x="182" y="108" width="1" height="1" fill="#a6a6a6"/><rect x="182" y="110" width="1" height="1" fill="#a6a6a6"/><rect x="182" y="112" width="1" height="1" fill="#a6a6a6"/><rect x="182" y="114" width="1" height="1" fill="#a6a6a6"/><rect x="188" y="106" width="1" height="1" fill="#a6a6a6"/><rect x="188" y="108" width="1" height="1" fill="#a6a6a6"/><rect x="188" y="110" width="1" height="1" fill="#a6a6a6"/><rect x="188" y="112" width="1" height="1" fill="#a6a6a6"/><rect x="188" y="114" width="1" height="1" fill="#a6a6a6"/><rect x="194" y="106" width="1" height="1" fill="#a6a6a6"/><rect x="194" y="108" width="1" height="1" fill="#a6a6a6"/><rect x="194" y="110" width="1" height="1" fill="#a6a6a6"/><rect x="194" y="112" width="1" height="1" fill="#a6a6a6"/><rect x="194" y="114" width="1" height="1" fill="#a6a6a6"/><rect x="182" y="115.5" width="13" height="1.3" fill="#a6a6a6"/><path d="M226 110 L231.5 104.5 L237 110 L231.5 115.5 Z" fill="none" stroke="#a6a6a6" stroke-width="1.3"/><path d="M229 103 L231.5 106" stroke="#a6a6a6" stroke-width="1.2"/><path d="M237.5 109.5 Q240.5 112 239 114" fill="none" stroke="#a6a6a6" stroke-width="1.6"/><rect x="224" y="115.5" width="16" height="3" fill="#e3dde2"/><rect x="302" y="72" width="14" height="1" fill="#a6a6a6"/><rect x="302" y="75" width="14" height="1" fill="#a6a6a6"/><rect x="302" y="78" width="14" height="1" fill="#a6a6a6"/><rect x="324" y="76" width="14" height="1" fill="#a6a6a6"/><rect x="324" y="79" width="14" height="1" fill="#a6a6a6"/><rect x="324" y="82" width="14" height="1" fill="#a6a6a6"/><rect x="346" y="81" width="14" height="1" fill="#a6a6a6"/><rect x="346" y="84" width="14" height="1" fill="#a6a6a6"/><rect x="346" y="87" width="14" height="1" fill="#a6a6a6"/><rect x="302" y="106" width="14" height="1" fill="#a6a6a6"/><rect x="324" y="106" width="14" height="1" fill="#a6a6a6"/><rect x="346" y="106" width="14" height="1" fill="#a6a6a6"/><rect x="302" y="109" width="10" height="1" fill="#a6a6a6"/><rect x="326" y="109" width="10" height="1" fill="#a6a6a6"/><rect x="350" y="109" width="10" height="1" fill="#a6a6a6"/><rect x="302" y="112" width="14" height="1" fill="#a6a6a6"/><rect x="324" y="112" width="14" height="1" fill="#a6a6a6"/><rect x="346" y="112" width="14" height="1" fill="#a6a6a6"/><rect x="302" y="115" width="10" height="1" fill="#a6a6a6"/><rect x="326" y="115" width="10" height="1" fill="#a6a6a6"/><rect x="350" y="115" width="10" height="1" fill="#a6a6a6"/><rect x="370" y="104" width="16" height="1" fill="#a6a6a6"/><rect x="370" y="116" width="16" height="1" fill="#a6a6a6"/><rect x="378" y="107" width="8" height="1" fill="#a6a6a6"/><rect x="378" y="110" width="8" height="1" fill="#a6a6a6"/><rect x="378" y="113" width="8" height="1" fill="#a6a6a6"/><path d="M376.8 110.5 H371.5 M374 107.5 L371 110.5 L374 113.5" fill="none" stroke="#a6a6a6" stroke-width="1.6"/><rect x="392" y="104" width="16" height="1" fill="#a6a6a6"/><rect x="392" y="116" width="16" height="1" fill="#a6a6a6"/><rect x="400" y="107" width="8" height="1" fill="#a6a6a6"/><rect x="400" y="110" width="8" height="1" fill="#a6a6a6"/><rect x="400" y="113" width="8" height="1" fill="#a6a6a6"/><path d="M392 110.5 H397.3 M394.8 107.5 L397.8 110.5 L394.8 113.5" fill="none" stroke="#a6a6a6" stroke-width="1.6"/><text x="0" y="0" font-family="Liberation Sans" font-size="11" fill="#a6a6a6" transform="translate(372.5,82.5) rotate(-45)">ab</text><path d="M376.5 86.5 L385.5 77.5 M382 77.5 H385.5 V81" fill="none" stroke="#a6a6a6" stroke-width="1.1"/><path d="M390 79.4 L395 79.4 L392.5 82.10000000000001 Z" fill="#a6a6a6"/><rect x="415" y="68" width="1" height="55" fill="#dadada"/><rect x="423.5" y="72.5" width="9" height="4" fill="none" stroke="#a6a6a6"/><rect x="423.5" y="79.5" width="9" height="7" fill="none" stroke="#a6a6a6"/><path d="M432.5 74.5 H437.5 M425 82 H431 M425 84.5 H430" stroke="#a6a6a6"/><path d="M437.5 78 Q439.5 84 433.5 84 M435 82 L433 84 L435 86" fill="none" stroke="#a6a6a6" stroke-width="1"/><rect x="423.5" y="103.5" width="14" height="14" fill="none" stroke="#a6a6a6"/><path d="M423.5 107.5 H437.5 M423.5 113.5 H437.5 M430.5 103.5 V107.5 M430.5 113.5 V117.5 M426 110.5 H435 M427.5 109 L426 110.5 L427.5 112 M433.5 109 L435 110.5 L433.5 112" fill="none" stroke="#a6a6a6"/><path d="M445 110.2 L450 110.2 L447.5 112.9 Z" fill="#a6a6a6"/><rect x="464.5" y="61.5" width="77" height="22" fill="#fff" stroke="#c6c6c6"/><rect x="528" y="62" width="13" height="21" fill="#e9e9e9"/><path d="M532 71.5 L537 71.5 L534.5 74.2 Z" fill="#c8c8c8"/><rect x="467.7" y="87.7" width="14.6" height="7.8" fill="#f3edf3" stroke="#a6a6a6" stroke-width="1.5"/><circle cx="474.8" cy="91.5" r="2.3" fill="#a6a6a6"/><path d="M475 95 H483 M472 97.5 H478 M479 97.5 H483 M471 100 H478 M471 102.5 H478" stroke="#d3ccd3" stroke-width="1.3" stroke-linecap="round"/><path d="M489 94 L494 94 L491.5 96.7 Z" fill="#666"/><text x="503" y="101" font-family="Liberation Sans" font-size="15" fill="#a6a6a6">%</text><ellipse cx="530.6" cy="92.6" rx="1.9" ry="1.7" fill="#a6a6a6"/><path d="M532.2 92.8 Q532.2 96 529 97.6" fill="none" stroke="#a6a6a6" stroke-width="1.4"/><text x="473.6" y="117" font-family="Liberation Sans" font-size="9.5" fill="#a6a6a6">.0</text><text x="469.3" y="124" font-family="Liberation Sans" font-size="9.5" fill="#a6a6a6">.00</text><path d="M467.5 114.4 H474 M470 112 L467.5 114.4 L470 116.8" fill="none" stroke="#a6a6a6" stroke-width="1.2"/><text x="491" y="117" font-family="Liberation Sans" font-size="9.5" fill="#a6a6a6">.00</text><text x="495.6" y="124" font-family="Liberation Sans" font-size="9.5" fill="#a6a6a6">.0</text><path d="M489 121.5 H495.5 M493 119.1 L495.5 121.5 L493 123.9" fill="none" stroke="#a6a6a6" stroke-width="1.2"/><rect x="554" y="64" width="7" height="12.5" fill="#a6a6a6"/><path d="M555 68 H560 M555 72 H560" stroke="#d6d6d6" stroke-width="1"/><rect x="561.5" y="64.5" width="3" height="4" fill="#fff" stroke="#a6a6a6"/><rect x="564.5" y="64.5" width="3" height="4" fill="#fff" stroke="#a6a6a6"/><rect x="560.6" y="71.6" width="8.8" height="7.8" fill="#fff" stroke="#a6a6a6" stroke-width="1.2"/><path d="M562.8 74.5 H567.2 M562.8 76.7 H567.2 M566 72.9 L564 78.3" stroke="#a6a6a6" stroke-width="0.9"/><rect x="554.5" y="87.5" width="15" height="12" fill="#dcdcdc" stroke="#a6a6a6"/><path d="M558.5 87.5 V99.5" stroke="#a6a6a6" stroke-width="1"/><path d="M562.5 87.5 V99.5" stroke="#a6a6a6" stroke-width="1"/><path d="M566.5 87.5 V99.5" stroke="#a6a6a6" stroke-width="1"/><path d="M554.5 91.5 H569.5" stroke="#a6a6a6" stroke-width="1"/><path d="M554.5 95.5 H569.5" stroke="#a6a6a6" stroke-width="1"/><rect x="555" y="88" width="3" height="3" fill="#fff"/><rect x="559" y="88" width="3" height="3" fill="#fff"/><rect x="563" y="88" width="3" height="3" fill="#fff"/><rect x="567" y="88" width="3" height="3" fill="#fff"/><rect x="555" y="92" width="3" height="3" fill="#fff"/><rect x="555" y="96" width="3" height="3" fill="#fff"/><path d="M561 99 L569.8 90" stroke="#f1f1f1" stroke-width="2.2"/><path d="M569.8 90.2 V95 L562.8 102.3 H558 L561.5 99 Z" fill="#a6a6a6"/><circle cx="562.3" cy="99.8" r="0.9" fill="#f1f1f1"/><rect x="554.5" y="110.5" width="15" height="12" fill="#dcdcdc" stroke="#a6a6a6"/><path d="M558.5 110.5 V122.5" stroke="#a6a6a6" stroke-width="1"/><path d="M562.5 110.5 V122.5" stroke="#a6a6a6" stroke-width="1"/><path d="M566.5 110.5 V122.5" stroke="#a6a6a6" stroke-width="1"/><path d="M554.5 114.5 H569.5" stroke="#a6a6a6" stroke-width="1"/><path d="M554.5 118.5 H569.5" stroke="#a6a6a6" stroke-width="1"/><rect x="555" y="111" width="3" height="3" fill="#fff"/><rect x="559" y="111" width="3" height="3" fill="#fff"/><rect x="563" y="111" width="3" height="3" fill="#fff"/><rect x="567" y="111" width="3" height="3" fill="#fff"/><rect x="555" y="115" width="3" height="3" fill="#fff"/><rect x="555" y="119" width="3" height="3" fill="#fff"/><path d="M561 122 L569.8 113" stroke="#f1f1f1" stroke-width="2.2"/><path d="M569.8 113.2 V118 L562.8 125.3 H558 L561.5 122 Z" fill="#a6a6a6"/><circle cx="562.3" cy="122.8" r="0.9" fill="#f1f1f1"/><rect x="724.5" y="64.5" width="4" height="3" fill="#fff" stroke="#a6a6a6" stroke-width="1"/><rect x="728.5" y="64.5" width="4" height="3" fill="#fff" stroke="#a6a6a6" stroke-width="1"/><rect x="731.5" y="69.5" width="3" height="3" fill="#fff" stroke="#a6a6a6" stroke-width="1"/><rect x="734.5" y="69.5" width="3" height="3" fill="#fff" stroke="#a6a6a6" stroke-width="1"/><rect x="737.5" y="69.5" width="3" height="3" fill="#fff" stroke="#a6a6a6" stroke-width="1"/><rect x="724.5" y="73.5" width="4" height="3" fill="#fff" stroke="#a6a6a6" stroke-width="1"/><rect x="728.5" y="73.5" width="4" height="3" fill="#fff" stroke="#a6a6a6" stroke-width="1"/><rect x="724.5" y="76.5" width="4" height="3" fill="#fff" stroke="#a6a6a6" stroke-width="1"/><rect x="728.5" y="76.5" width="4" height="3" fill="#fff" stroke="#a6a6a6" stroke-width="1"/><path d="M724.5 70.8 H730 M726.8 68.5 L724.5 70.8 L726.8 73.1" fill="none" stroke="#a6a6a6" stroke-width="1.2"/><rect x="724.5" y="87.5" width="4" height="3" fill="#fff" stroke="#a6a6a6" stroke-width="1"/><rect x="728.5" y="87.5" width="4" height="3" fill="#fff" stroke="#a6a6a6" stroke-width="1"/><rect x="727.5" y="91.5" width="4" height="3" fill="#fff" stroke="#a6a6a6" stroke-width="1"/><rect x="724.5" y="95.5" width="4" height="3" fill="#fff" stroke="#a6a6a6" stroke-width="1"/><rect x="728.5" y="95.5" width="4" height="3" fill="#fff" stroke="#a6a6a6" stroke-width="1"/><rect x="724.5" y="98.5" width="4" height="3" fill="#fff" stroke="#a6a6a6" stroke-width="1"/><rect x="728.5" y="98.5" width="4" height="3" fill="#fff" stroke="#a6a6a6" stroke-width="1"/><path d="M733 90.8 L739.5 97.3 M739.5 90.8 L733 97.3" stroke="#a6a6a6" stroke-width="1.3"/><path d="M724.5 111.2 H737.5 M724.5 109.5 V113 M737.5 109.5 V113 M727 110 L725.5 111.2 L727 112.4 M735 110 L736.5 111.2 L735 112.4" fill="none" stroke="#2e75c6" stroke-width="1.1"/><rect x="724.5" y="114.5" width="15" height="9" fill="#fff" stroke="#555" stroke-width="1"/><path d="M724.5 117.5 H739.5 M724.5 120.5 H739.5 M728.5 114.5 V123.5 M732.5 114.5 V123.5 M736 114.5 V123.5" stroke="#bbb" stroke-width="1"/><rect x="728" y="117" width="4.5" height="3.5" fill="#2e75c6"/><path d="M725 124.5 H738" stroke="#555" stroke-width="1"/><path d="M782 72 L787 72 L784.5 74.7 Z" fill="#666"/><path d="M786 95 L791 95 L788.5 97.7 Z" fill="#666"/><path d="M784.5 118 L789.5 118 L787.0 120.7 Z" fill="#666"/><path d="M808.5 65.5 H822 V68 M808.5 65.5 L815 72 L808.5 78.5 H822 V76" fill="none" stroke="#a6a6a6" stroke-width="1.8"/><path d="M830 72 L835 72 L832.5 74.7 Z" fill="#666"/><text x="843" y="72" font-family="Liberation Sans" font-size="8" fill="#a6a6a6">A</text><text x="843" y="80" font-family="Liberation Sans" font-size="8" fill="#a6a6a6">Z</text><path d="M850 69 H857 L854.5 72.5 V76 L852.5 77 V72.5 Z" fill="#a6a6a6"/><path d="M863 72 L868 72 L865.5 74.7 Z" fill="#c0c0c0"/><rect x="809.5" y="87.5" width="13" height="14" fill="#fff" stroke="#555"/><rect x="809" y="87" width="14" height="3" fill="#555"/><path d="M816 91 V98 M813 95 L816 98.5 L819 95" fill="none" stroke="#2e75c6" stroke-width="1.6"/><path d="M828.5 95 L833.5 95 L831.0 97.7 Z" fill="#666"/><circle cx="853" cy="93" r="3.8" fill="none" stroke="#2e75c6" stroke-width="1.8"/><path d="M850.5 96 L845.5 101" stroke="#2e75c6" stroke-width="2.2" stroke-linecap="round"/><path d="M863 95 L868 95 L865.5 97.7 Z" fill="#666"/><path d="M811 120 L817.5 113 L822 117 L815.5 124 H812.5 Z" fill="#e26c7f"/><path d="M811 120 L815 124" stroke="#f1f1f1" stroke-width="1"/><rect x="815" y="124.5" width="8" height="1" fill="#888"/><path d="M829 118 L834 118 L831.5 120.7 Z" fill="#666"/><path d="M897.5 145 L901.5 140.5 L905.5 145" fill="none" stroke="#555" stroke-width="1.5"/><path d="M700 72 L705 72 L702.5 74.7 Z" fill="#c0c0c0"/><path d="M659.5 95 L664.5 95 L662.0 97.7 Z" fill="#c0c0c0"/><path d="M629 118 L634 118 L631.5 120.7 Z" fill="#c0c0c0"/><path d="M125 106.8 L122 115" stroke="#a6a6a6" stroke-width="1.7"/><path d="M122.5 106.6 H127.2 M119.9 115.2 H124.6" stroke="#a6a6a6" stroke-width="1.1"/></svg>
<div style="left:94.50px;top:74px;font-size:12px;line-height:14px;color:#333;white-space:nowrap;letter-spacing:-0.200px;">Arial</div>
<div style="left:205.60px;top:74px;font-size:12px;line-height:14px;color:#333;white-space:nowrap;">10</div>
<svg style="left:0px;top:0px;" width="917" height="200" viewBox="0 0 917 200"><path d="M21.8 9.8 H34.2 V22.2 H21.8 Z" fill="none" stroke="#fff" stroke-width="1.6"/><rect x="23" y="14.2" width="10" height="1.6" fill="#fff"/><rect x="24.5" y="18" width="7" height="4.5" fill="#fff"/><rect x="26.3" y="19.5" width="2.4" height="3" fill="#217346"/><path d="M66 14 H73 Q77.5 14 77.5 17.5 Q77.5 21 73 21 H71" fill="none" stroke="#6fa386" stroke-width="1.6"/><path d="M68.5 10.5 L65 14 L68.5 17.5" fill="none" stroke="#6fa386" stroke-width="1.6"/><path d="M87 14.5 H91.7 L89.35 16.8 Z" fill="#6fa386"/><path d="M120 14 H113 Q108.5 14 108.5 17.5 Q108.5 21 113 21 H115" fill="none" stroke="#6fa386" stroke-width="1.6"/><path d="M117.5 10.5 L121 14 L117.5 17.5" fill="none" stroke="#6fa386" stroke-width="1.6"/><path d="M131 14.5 H135.8 L133.4 16.8 Z" fill="#6fa386"/><rect x="158.5" y="12.7" width="6" height="1.3" fill="#fff"/><path d="M158.3 15.5 H164.6 L161.45 19.2 Z" fill="#fff"/><rect x="748.6" y="11.6" width="12" height="9" fill="none" stroke="#fff" stroke-width="1.2"/><rect x="748" y="13" width="13" height="1.2" fill="#fff"/><path d="M754.6 21 V16 M752.4 18.2 L754.6 16 L756.8 18.2" fill="none" stroke="#fff" stroke-width="1.4"/><rect x="796" y="17" width="9.5" height="2" fill="#fff"/><rect x="842.6" y="11.6" width="9" height="9" fill="none" stroke="#fff" stroke-width="1.3"/><rect x="842" y="11" width="10.2" height="2.6" fill="#fff"/><path d="M888.8 11.8 L897.8 20.8 M897.8 11.8 L888.8 20.8" stroke="#fff" stroke-width="1.9"/><path d="M606.5 49.5 H611.5 M606.8 47.5 H611.2 Q611 44.5 612.3 43 Q614 41 613.5 39.5 Q612.5 36.5 609 36.5 Q605.5 36.5 604.5 39.5 Q604 41 605.7 43 Q607 44.5 606.8 47.5" fill="none" stroke="#b8d4c3" stroke-width="1.1"/><circle cx="855" cy="41.5" r="3.8" fill="none" stroke="#fff" stroke-width="1.3"/><path d="M849.5 52 Q850 46.5 855 46 Q857 46 858.5 47" fill="none" stroke="#fff" stroke-width="1.3"/><path d="M859 50.5 H865 M862 47.5 V53.5" stroke="#fff" stroke-width="1.3"/><rect x="122" y="169" width="2" height="2" fill="#999"/><rect x="122" y="173" width="2" height="2" fill="#999"/><rect x="122" y="177" width="2" height="2" fill="#999"/><path d="M94 171.5 L101 171.5 L97.5 175.5 Z" fill="#777"/><path d="M152 170 L162 179 M162 170 L152 179" stroke="#b4b4b4" stroke-width="1.7"/><path d="M187 174.5 L191.5 178.8 L200 170.2" fill="none" stroke="#b4b4b4" stroke-width="2.2"/><path d="M899.5 171.5 L902.5 174.5 L905.5 171.5" fill="none" stroke="#666" stroke-width="1.6"/></svg>
<div style="left:223px;top:165px;font-family:'Liberation Serif',serif;font-style:italic;font-weight:bold;font-size:15px;line-height:16px;color:#555;">f</div>
<div style="left:229px;top:168px;font-family:'Liberation Serif',serif;font-style:italic;font-weight:bold;font-size:11px;line-height:12px;color:#555;">x</div>
</body></html>
